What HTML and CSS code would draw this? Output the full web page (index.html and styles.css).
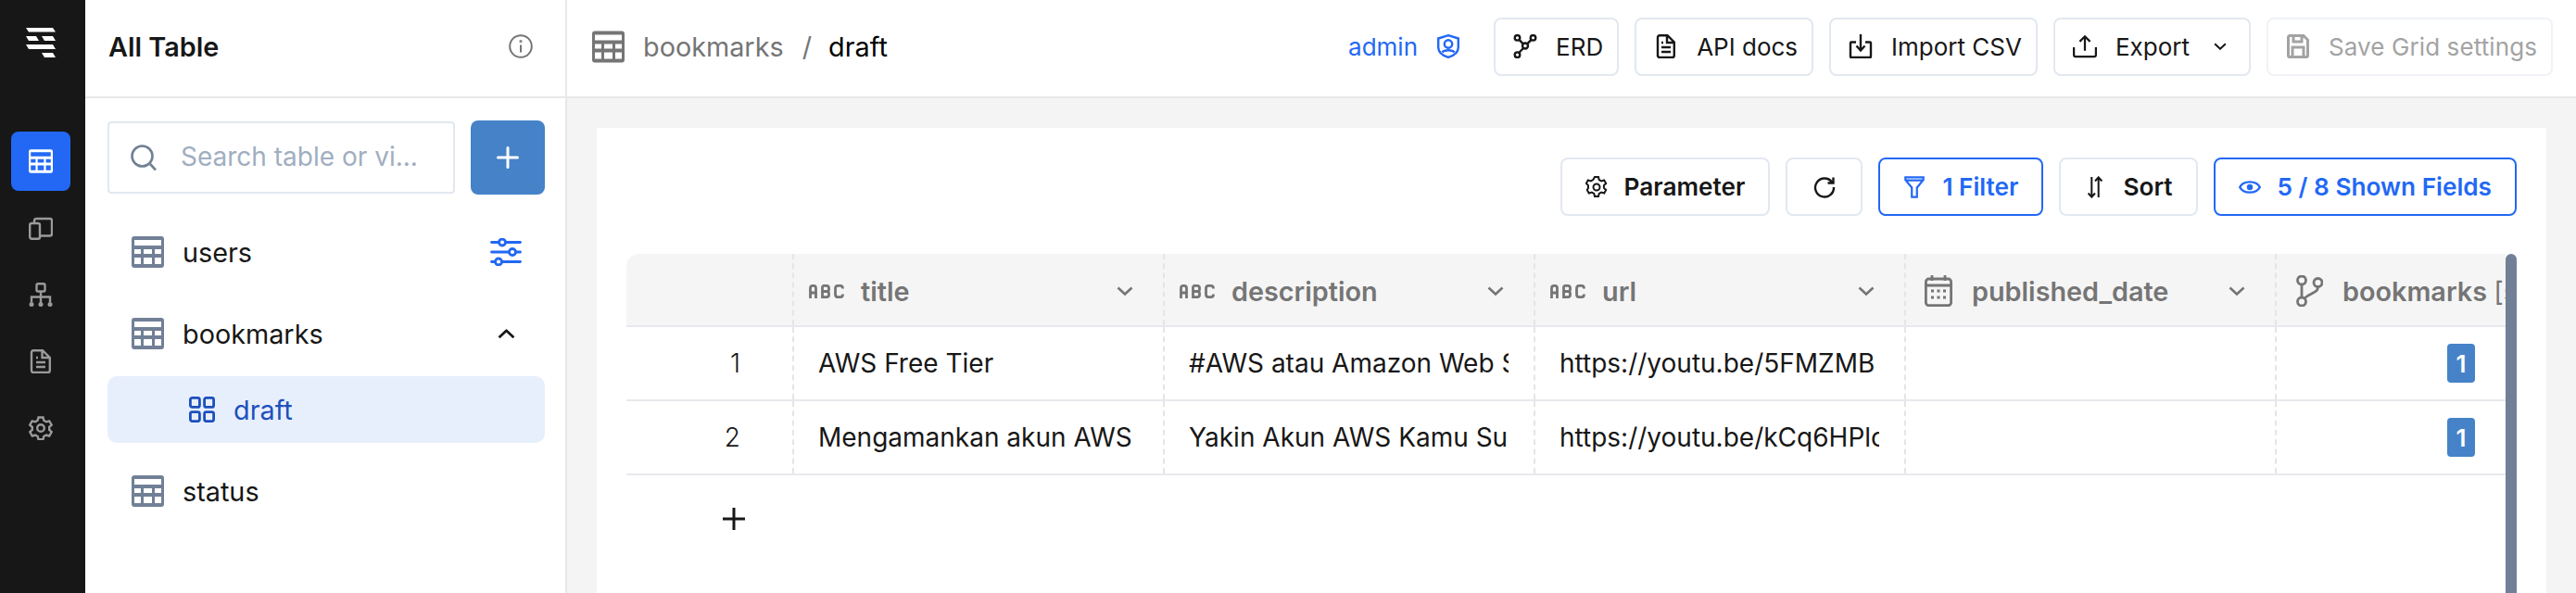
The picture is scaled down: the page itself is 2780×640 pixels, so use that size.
FILE: index.html
```html
<!DOCTYPE html>
<html>

<head>
    <meta charset="utf-8">
    <title>bookmarks / draft</title>
    <link rel="stylesheet" href="styles.css">
</head>

<body>
    <svg class="defs" width="0" height="0">
        <symbol id="table" viewBox="0 0 35 34">
            <path fill-rule="evenodd" d="M3 0h29a3 3 0 0 1 3 3v28a3 3 0 0 1-3 3H3a3 3 0 0 1-3-3V3a3 3 0 0 1 3-3zM3 4v6h29V4zM3 14v5h7v-5zM13 14v5h9v-5zM25 14v5h7v-5zM3 23v7h7v-7zM13 23v7h9v-7zM25 23v7h7v-7z" />
        </symbol>
        <symbol id="abc" viewBox="0 0 38 15">
            <path fill="none" stroke="currentColor" stroke-width="2.800" d="M1.500 15V4q0-2.600 2.500-2.600h1q2.500 0 2.500 2.600v11M1.500 9h6M14.500 1.400h4.500q2.500 0 2.500 2.400v1.400q0 2.300-2.500 2.300h-4.500M19 7.500q2.500 0 2.500 2.300v1.400q0 2.400-2.500 2.400h-4.500V1.400M36.500 4.500q0-3.100-2.500-3.100h-3q-2.500 0-2.500 3.100v6q0 3.100 2.500 3.100h3q2.500 0 2.500-3.100" />
        </symbol>
        <symbol id="chev" viewBox="0 0 18 10">
            <path fill="none" stroke="currentColor" stroke-width="2.600" d="M1.500 1.500 9 8.500l7.500-7" />
        </symbol>
    </svg>

    <nav class="rail">
        <svg class="logo" viewBox="0 0 32 32" fill="#fff">
            <path d="M0 0h29l3 4.500H3zM0 9h11l3 5H3zM17 9h12l3 5H20zM0 18h29l3 5H3zM17 27h12l3 5H20z" />
        </svg>
        <div class="railitems">
            <a class="railbtn active">
                <svg viewBox="0 0 26 26" fill="#fff"><use href="#table" /></svg>
            </a>
            <a class="railbtn">
                <svg viewBox="0 0 26 26" fill="none" stroke="#9a9a9a" stroke-width="2.400">
                    <path d="M6 8V5a2 2 0 0 1 2-2h15a2 2 0 0 1 2 2v14.500a2 2 0 0 1-2 2H12" />
                    <rect x="1.200" y="8" width="10.800" height="16.800" rx="2" />
                </svg>
            </a>
            <a class="railbtn">
                <svg viewBox="0 0 26 26" fill="none" stroke="#9a9a9a" stroke-width="2.400">
                    <rect x="8.500" y="1.200" width="9" height="8.300" rx="1.500" />
                    <path d="M13 9.500V22M3 21v-5.500h20V21" />
                    <g fill="#9a9a9a" stroke="none">
                        <circle cx="3" cy="23.500" r="2.500" />
                        <circle cx="13" cy="23.500" r="2.500" />
                        <circle cx="23" cy="23.500" r="2.500" />
                    </g>
                </svg>
            </a>
            <a class="railbtn">
                <svg viewBox="0 0 26 26" fill="none" stroke="#9a9a9a" stroke-width="2.400">
                    <path d="M5 1.200h10l7.800 7.800v14a2 2 0 0 1-2 2H5a2 2 0 0 1-2-2V3.200a2 2 0 0 1 2-2zM14.500 1.500V9h8M8 9h2M8 14h10M8 19h10" />
                </svg>
            </a>
            <a class="railbtn">
                <svg viewBox="0 0 26 26" fill="none" stroke="#9a9a9a" stroke-width="2.400">
                    <path d="M10.500 1.500h5l.8 3.300 2.600 1.500 3.300-1 2.500 4.300-2.500 2.300v3l2.500 2.300-2.500 4.300-3.300-1-2.600 1.500-.8 3.300h-5l-.8-3.300-2.600-1.500-3.300 1-2.500-4.300 2.500-2.300v-3L1.200 9.600l2.500-4.300 3.300 1 2.600-1.500z" />
                    <circle cx="13" cy="13" r="3.800" />
                </svg>
            </a>
        </div>
    </nav>

    <aside class="sidebar">
        <div class="sidehead">
            <h2>All Table</h2>
            <svg class="ico26" viewBox="0 0 26 26" fill="none" stroke="#757575" stroke-width="2">
                <circle cx="13" cy="13" r="11.800" />
                <path d="M13 11.500v8" />
                <circle cx="13" cy="7.500" r=".6" />
            </svg>
        </div>
        <div class="sidebody">
            <div class="searchrow">
                <div class="search">
                    <svg viewBox="0 0 28 28" fill="none" stroke="#718096" stroke-width="2.600">
                        <circle cx="12.500" cy="12.500" r="11" />
                        <path d="m21 21 6 6.500" />
                    </svg>
                    <span>Search table or vi...</span>
                </div>
                <button class="addbtn">
                    <svg viewBox="0 0 24 24" fill="none" stroke="#fff" stroke-width="3" stroke-linecap="round">
                        <path d="M12 1.500v21M1.500 12h21" />
                    </svg>
                </button>
            </div>
            <div class="treerow">
                <svg class="tblico"><use href="#table" /></svg>
                <span>users</span>
                <svg class="rowaction" viewBox="0 0 34 30" fill="#fff" stroke="#2268f5" stroke-width="2.800" stroke-linecap="round">
                    <path d="M1.500 4.500h31M1.500 15h31M1.500 25.500h31" />
                    <circle cx="13" cy="4.500" r="3.500" />
                    <circle cx="24" cy="15" r="3.500" />
                    <circle cx="9" cy="25.500" r="3.500" />
                </svg>
            </div>
            <div class="treerow">
                <svg class="tblico"><use href="#table" /></svg>
                <span>bookmarks</span>
                <svg class="rowchev" viewBox="0 0 18 10"><use href="#chev" /></svg>
            </div>
            <div class="treerow sub">
                <svg class="subico" viewBox="0 0 28 28" fill="none" stroke="currentColor" stroke-width="2.800">
                    <rect x="1.400" y="1.400" width="10" height="10" rx="2" />
                    <rect x="16.600" y="1.400" width="10" height="10" rx="2" />
                    <rect x="1.400" y="16.600" width="10" height="10" rx="2" />
                    <rect x="16.600" y="16.600" width="10" height="10" rx="2" />
                </svg>
                <span>draft</span>
            </div>
            <div class="treerow">
                <svg class="tblico"><use href="#table" /></svg>
                <span>status</span>
            </div>
        </div>
    </aside>

    <div class="main">
        <header class="topbar">
            <div class="crumbs">
                <svg class="crumbico"><use href="#table" /></svg>
                <span class="crumb">bookmarks</span>
                <span class="crumb">/</span>
                <span class="current">draft</span>
            </div>
            <div class="admin">
                <span>admin</span>
                <svg viewBox="0 0 24 26" fill="none" stroke="#2268f5" stroke-width="2.400">
                    <path d="M12 1.200 22.800 4.500V14c0 5-4.500 9-10.800 10.800C5.700 23 1.200 19 1.200 14V4.500z" />
                    <circle cx="12" cy="10.500" r="4.200" />
                    <path d="M5.500 19.500c2-3 11-3 13 0" />
                </svg>
            </div>
            <div class="actions">
                <button class="btn">
                    <svg class="ico26" viewBox="0 0 26 26" fill="none" stroke="#171717" stroke-width="2.400">
                        <circle cx="4.500" cy="3.800" r="2.800" />
                        <circle cx="21.500" cy="3.800" r="2.800" />
                        <circle cx="13" cy="12.500" r="3" />
                        <circle cx="4.500" cy="22.200" r="2.800" />
                        <path d="m6.500 5.800 4.300 4.500M19.500 5.800l-4.300 4.500M11 15l-4.800 5" />
                    </svg>
                    ERD
                </button>
                <button class="btn">
                    <svg class="ico26" viewBox="-3 0 26 26" fill="none" stroke="#171717" stroke-width="2.400">
                        <path d="M3 1.200h8.500l7.300 7.300V23a2 2 0 0 1-2 2H3a2 2 0 0 1-2-2V3.200a2 2 0 0 1 2-2zM11 1.500V9h7.500M5 9h2M5 14h10M5 19h10" />
                    </svg>
                    API docs
                </button>
                <button class="btn">
                    <svg class="ico26" viewBox="-1 0 26 26" fill="none" stroke="#171717" stroke-width="2.400">
                        <path d="M7 8.500H2a1 1 0 0 0-1 1V24a1 1 0 0 0 1 1h20a1 1 0 0 0 1-1V9.500a1 1 0 0 0-1-1h-5M12 0v17" />
                        <path d="m7.500 12.500 4.500 5 4.500-5" />
                    </svg>
                    Import CSV
                </button>
                <button class="btn export">
                    <svg class="ico26" viewBox="0 0 28 26" fill="none" stroke="#171717" stroke-width="2.400">
                        <path d="M1.200 14v9a2 2 0 0 0 2 2h21.600a2 2 0 0 0 2-2v-9M14 2v16M8 7.500 14 1.500l6 6" />
                    </svg>
                    Export
                    <svg class="btnchev" viewBox="0 0 18 10"><use href="#chev" /></svg>
                </button>
                <button class="btn disabled">
                    <svg class="ico26" viewBox="-1 0 26 26" fill="none" stroke="#a3a3a3" stroke-width="3">
                        <path d="M3 1.500h15l4.500 4.500v17a1.500 1.500 0 0 1-1.500 1.500H3A1.500 1.500 0 0 1 1.500 23V3A1.500 1.500 0 0 1 3 1.500zM7 1.500V8h9V1.500M6 24.500V14h12v10.500" />
                    </svg>
                    Save Grid settings
                </button>
            </div>
        </header>

        <section class="content">
            <div class="card">
                <div class="toolbar">
                    <button class="btn strong">
                        <svg class="ico24" viewBox="0 0 24 24" fill="none" stroke="#171717" stroke-width="2">
                            <path d="M10 1h4l.7 3 2.500 1.400 3-.9 2 3.500-2.300 2.100v2.800l2.300 2.100-2 3.500-3-.9-2.500 1.400-.7 3h-4l-.7-3-2.500-1.400-3 .9-2-3.500L3 13V10.100L.8 8l2-3.500 3 .9L8.300 4z" />
                            <circle cx="12" cy="12" r="3.500" />
                        </svg>
                        Parameter
                    </button>
                    <button class="btn square">
                        <svg class="ico24" viewBox="0 0 24 24" fill="none" stroke="#171717" stroke-width="2.400">
                            <path d="M20 6.500A10 10 0 1 0 22 12M21.500 1.500v6h-6" />
                        </svg>
                    </button>
                    <button class="btn strong blue">
                        <svg class="ico24" viewBox="0 0 24 26" fill="none" stroke="#2268f5" stroke-width="2.400">
                            <path d="M1.500 1.500h21v3l-7.500 9v11H9v-11l-7.500-9zM1.500 5h21" />
                        </svg>
                        1 Filter
                    </button>
                    <button class="btn strong">
                        <svg class="ico24" viewBox="0 0 18 26" fill="none" stroke="#171717" stroke-width="2.200">
                            <path d="M5 1v23M1 20l4 4.500L9 20M13 25V2M9 6l4-4.500L17 6" />
                        </svg>
                        Sort
                    </button>
                    <button class="btn strong blue">
                        <svg class="ico24" viewBox="0 0 24 24" fill="none" stroke="#2268f5" stroke-width="2.400">
                            <path d="M1.200 12C5 4.500 19 4.500 22.800 12 19 19.500 5 19.500 1.200 12z" />
                            <circle cx="12" cy="12" r="3.200" fill="#2268f5" stroke="none" />
                        </svg>
                        5 / 8 Shown Fields
                    </button>
                </div>

                <div class="tablewrap">
                    <div class="grid">
                        <div class="gridrow head">
                            <div class="idx"></div>
                            <div class="col">
                                <svg class="abc"><use href="#abc" /></svg>
                                <span class="colname">title</span>
                                <svg class="colchev" viewBox="0 0 18 10"><use href="#chev" /></svg>
                            </div>
                            <div class="col">
                                <svg class="abc"><use href="#abc" /></svg>
                                <span class="colname">description</span>
                                <svg class="colchev" viewBox="0 0 18 10"><use href="#chev" /></svg>
                            </div>
                            <div class="col">
                                <svg class="abc"><use href="#abc" /></svg>
                                <span class="colname">url</span>
                                <svg class="colchev" viewBox="0 0 18 10"><use href="#chev" /></svg>
                            </div>
                            <div class="col">
                                <svg class="colico" viewBox="0 0 30 34" fill="none" stroke="#757575" stroke-width="2.800">
                                    <rect x="1.400" y="4" width="27.200" height="28.600" rx="3" />
                                    <path d="M1.400 11h27.200M8 0v6M22 0v6" />
                                    <path d="M7 17h3M13.500 17h3M20 17h3M7 24h3M13.500 24h3M20 24h3" stroke-width="3" />
                                </svg>
                                <span class="colname">published_date</span>
                                <svg class="colchev" viewBox="0 0 18 10"><use href="#chev" /></svg>
                            </div>
                            <div class="col">
                                <svg class="colico" viewBox="0 0 30 34" fill="none" stroke="#757575" stroke-width="2.800">
                                    <circle cx="7" cy="5.500" r="4.500" />
                                    <circle cx="24.500" cy="8" r="4.500" />
                                    <circle cx="7" cy="28.500" r="4.500" />
                                    <path d="M7 10v14M24.500 12.500c0 7-8 6-14.500 12.500" />
                                </svg>
                                <span class="colname">bookmarks <span class="tag">[status]</span></span>
                            </div>
                        </div>
                        <div class="gridrow">
                            <div class="idx">1</div>
                            <div class="cell"><span>AWS Free Tier</span></div>
                            <div class="cell"><span>#AWS atau Amazon Web Services</span></div>
                            <div class="cell"><span>https://youtu.be/5FMZMB</span></div>
                            <div class="cell"></div>
                            <div class="cell right"><b class="badge">1</b></div>
                        </div>
                        <div class="gridrow">
                            <div class="idx">2</div>
                            <div class="cell"><span>Mengamankan akun AWS</span></div>
                            <div class="cell"><span>Yakin Akun AWS Kamu Sudah</span></div>
                            <div class="cell"><span>https://youtu.be/kCq6HPlc</span></div>
                            <div class="cell"></div>
                            <div class="cell right"><b class="badge">1</b></div>
                        </div>
                    </div>
                    <div class="addrow">
                        <svg viewBox="0 0 24 24" fill="none" stroke="#171717" stroke-width="3">
                            <path d="M12 0v24M0 12h24" />
                        </svg>
                    </div>
                    <div class="scrollbar"></div>
                </div>
            </div>
        </section>
    </div>
</body>

</html>
```

FILE: styles.css
```css
:root {
    --blue: #2268f5;
    --steel: #4682c8;
    --slate: #718096;
    --grey: #757575;
    --ink: #171717;
    --line: #e2e8f0;
    --rowline: #e8e8ee;
}

* {
    box-sizing: border-box;
}

html,
body {
    height: 100%;
}

body {
    margin: 0;
    display: flex;
    overflow: hidden;
    font-family: Inter, "Liberation Sans", sans-serif;
    font-size: 28.8px;
    color: var(--ink);
    background-color: #fff;
}

.defs {
    position: absolute;
}

.rail {
    width: 92px;
    flex: none;
    padding: 30px 4px 0 0;
    background-color: #171717;
    display: flex;
    flex-direction: column;
    align-items: center;
}

.logo {
    width: 32px;
    height: 32px;
    flex: none;
}

.railitems {
    margin-top: 80px;
    display: flex;
    flex-direction: column;
    gap: 8px;
}

.railbtn {
    width: 64px;
    height: 64px;
    border-radius: 8px;
    display: flex;
    align-items: center;
    justify-content: center;
}

.railbtn svg {
    width: 26px;
    height: 26px;
}

.railbtn.active {
    background-color: var(--blue);
}

.sidebar {
    width: 520px;
    flex: none;
    border-right: 2px solid #e8e8e8;
}

.sidehead {
    height: 106px;
    padding: 0 35px 4px 25px;
    border-bottom: 2px solid #e8e8e8;
    display: flex;
    align-items: center;
    justify-content: space-between;
}

.sidehead h2 {
    margin: 0;
    font-size: 28.8px;
    font-weight: 600;
}

.ico26 {
    width: 26px;
    height: 26px;
    flex: none;
}

.ico24 {
    height: 24px;
    width: 24px;
    flex: none;
}

.sidebody {
    padding: 24px 22px 0 24px;
}

.searchrow {
    display: flex;
    align-items: center;
    gap: 17px;
    margin-bottom: 18px;
}

.search {
    flex: 1;
    height: 78px;
    padding-left: 23px;
    border: 2px solid var(--line);
    border-radius: 4px;
    display: flex;
    align-items: center;
    gap: 26px;
    font-size: 28px;
    color: #a0aec0;
    white-space: nowrap;
}

.search span {
    padding-bottom: 3px;
}

.search svg {
    width: 28px;
    height: 28px;
    flex: none;
}

.addbtn {
    width: 80px;
    height: 80px;
    flex: none;
    padding: 0;
    border: 0;
    border-radius: 8px;
    background-color: var(--steel);
    display: flex;
    align-items: center;
    justify-content: center;
}

.addbtn svg {
    width: 24px;
    height: 24px;
}

.treerow {
    height: 88px;
    padding: 0 25px 0 26px;
    display: flex;
    align-items: center;
    gap: 20px;
}

.treerow span {
    flex: 1;
}

.tblico {
    width: 35px;
    height: 34px;
    fill: var(--slate);
    flex: none;
}

.rowaction {
    width: 34px;
    height: 30px;
}

.rowchev {
    width: 19px;
    height: 11px;
    margin-right: 7px;
    transform: rotate(180deg);
}

.treerow.sub {
    height: 72px;
    margin: 2px 0 8px;
    padding-left: 88px;
    border-radius: 10px;
    color: #1c50bc;
    background-color: #e8effc;
}

.subico {
    width: 28px;
    height: 28px;
}

.main {
    flex: 1;
    min-width: 0;
    display: flex;
    flex-direction: column;
}

.topbar {
    height: 106px;
    flex: none;
    padding: 0 25px 4px 27px;
    border-bottom: 2px solid #e8e8e8;
    display: flex;
    align-items: center;
}

.crumbs {
    display: flex;
    align-items: center;
    gap: 20px;
    flex: 1;
}

.crumbico {
    width: 35px;
    height: 35px;
    fill: var(--grey);
}

.crumb {
    color: var(--grey);
}

.current {
    color: #000;
    margin-left: -2px;
}

.admin {
    display: flex;
    align-items: center;
    gap: 21px;
    margin-right: 37px;
    font-size: 26px;
    color: var(--blue);
}

.admin svg {
    width: 24px;
    height: 26px;
}

.actions {
    display: flex;
    gap: 17px;
}

.btn {
    height: 63px;
    padding: 0 15px 0 19px;
    border: 2px solid var(--line);
    border-radius: 8px;
    background-color: #fff;
    font: inherit;
    font-size: 26px;
    color: var(--ink);
    display: flex;
    align-items: center;
    gap: 20px;
    white-space: nowrap;
}

.btnchev {
    width: 14px;
    height: 8px;
    margin: 0 9px 0 6px;
}

.btn.disabled {
    color: #a3a3a3;
    border-color: #eff2f7;
    letter-spacing: 0.1px;
}

.btn.strong {
    font-size: 26.2px;
    font-weight: 600;
    gap: 18px;
    padding: 0 25px;
}

.btn.square {
    width: 83px;
    padding: 0;
    justify-content: center;
}

.btn.blue {
    color: var(--blue);
    border-color: var(--blue);
}

.content {
    flex: 1;
    min-height: 0;
    padding: 32px 32px 0;
    background-color: #f4f4f4;
}

.card {
    height: 100%;
    padding: 32px 32px 0;
    background-color: #fff;
    display: flex;
    flex-direction: column;
}

.toolbar {
    flex: none;
    display: flex;
    justify-content: flex-end;
    gap: 17px;
}

.tablewrap {
    position: relative;
    margin-top: 41px;
    flex: 1;
    min-height: 0;
    overflow: hidden;
}

.grid {
    width: 2028px;
    overflow: hidden;
    border-top-left-radius: 14px;
}

.gridrow {
    display: flex;
    height: 80px;
    border-bottom: 2px solid var(--rowline);
    font-size: 28px;
}

.gridrow.head {
    height: 79px;
    background-color: #f5f5f5;
    font-size: 28.8px;
    font-weight: 600;
    color: var(--grey);
}

.idx {
    width: 179px;
    flex: none;
    padding-right: 56px;
    text-align: right;
    font-weight: 300;
    line-height: 78px;
    color: var(--ink);
}

.col,
.cell {
    width: 400px;
    flex: none;
    border-left: 2px dashed #e5e5e5;
    display: flex;
    align-items: center;
    overflow: hidden;
}

.col {
    padding: 3px 32px 0 20px;
    color: var(--grey);
}

.cell {
    padding: 0 27px 0 26px;
}

.cell span {
    white-space: nowrap;
    overflow: hidden;
}

.cell.right {
    justify-content: flex-end;
    padding-right: 184px;
}

.abc {
    width: 38px;
    height: 15px;
    flex: none;
    color: var(--grey);
    margin: 0 18px 0 -4px;
}

.colname {
    flex: 1;
    white-space: nowrap;
}

.tag {
    font-weight: 400;
}

.colico {
    width: 30px;
    height: 34px;
    flex: none;
    margin-right: 21px;
}

.colchev {
    width: 18px;
    height: 10px;
    flex: none;
    color: var(--grey);
}

.badge {
    width: 30px;
    height: 42px;
    border-radius: 4px;
    background-color: var(--steel);
    color: #fff;
    font-size: 26px;
    font-weight: 600;
    display: flex;
    align-items: center;
    justify-content: center;
}

.addrow {
    height: 94px;
    padding-left: 104px;
    display: flex;
    align-items: center;
}

.addrow svg {
    width: 24px;
    height: 24px;
}

.scrollbar {
    position: absolute;
    top: 0;
    right: 0;
    bottom: 0;
    width: 12px;
    border-radius: 6px 6px 0 0;
    background-color: var(--slate);
}
```
